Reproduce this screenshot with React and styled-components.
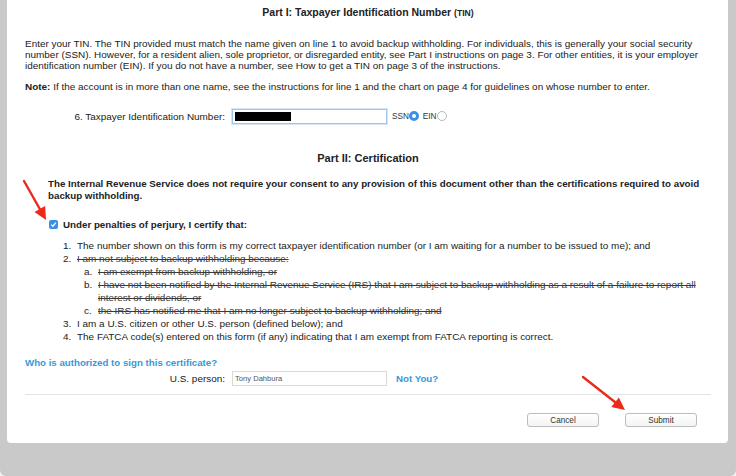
import styled, { createGlobalStyle } from "styled-components";

const GlobalStyle = createGlobalStyle`
  body {
    margin: 0;
    background: #f2f2f2;
    font-family: "Liberation Sans", Arial, sans-serif;
  }
`;

const Frame = styled.div`
  position: relative;
  width: 736px;
  height: 476px;
  box-sizing: border-box;
  background: #c9c9c9;
  padding: 0 8px 33px 7px;
  border-radius: 0 0 6px 6px;
  display: flex;
`;

const Panel = styled.div`
  flex: 1;
  background: #fff;
  border-radius: 0 0 4px 4px;
  padding: 0 17px 0 18px;
  color: #222;
  font-size: 9.95px;
`;

const Heading = styled.div`
  text-align: center;
  font-weight: bold;
  font-size: ${(p) => p.size}px;
  height: ${(p) => p.h}px;
  line-height: ${(p) => p.h}px;
  margin-top: ${(p) => p.top || 0}px;
  small {
    font-size: 8.6px;
  }
`;

const Para = styled.p`
  margin: ${(p) => p.top || 0}px 0 0;
  line-height: ${(p) => p.lh || 11}px;
  font-weight: ${(p) => (p.bold ? "bold" : "normal")};
  font-size: ${(p) => (p.bold ? "9.75px" : "inherit")};
  padding-left: ${(p) => p.indent || 0}px;
  white-space: nowrap;
`;

const FieldRow = styled.div`
  display: flex;
  align-items: center;
  height: ${(p) => p.h || 16}px;
  margin-top: ${(p) => p.top || 0}px;
`;

const Label = styled.span`
  width: 200px;
  text-align: right;
  padding-right: 7px;
`;

const TextBox = styled.div`
  width: 155px;
  height: 15px;
  box-sizing: border-box;
  border: 1px solid ${(p) => (p.focus ? "#9cc6ec" : "#d9d9d9")};
  box-shadow: ${(p) => (p.focus ? "0 0 0 1px #d4e6f7" : "none")};
  display: flex;
  align-items: center;
  padding: 0 2px;
  font-size: 7.6px;
  color: #555;
`;

const Redacted = styled.div`
  width: 56px;
  height: 9px;
  background: #000;
`;

const RadioLabel = styled.span`
  font-size: 8.2px;
  margin-left: ${(p) => p.gap || 0}px;
  color: #333;
`;

const Radio = styled.span`
  width: 10px;
  height: 10px;
  border-radius: 50%;
  box-sizing: border-box;
  border: ${(p) => (p.on ? "3px solid #3d8fe6" : "1px solid #b9b9b9")};
  background: #fff;
`;

const CheckRow = styled.div`
  display: flex;
  align-items: center;
  gap: 5px;
  margin-top: 15px;
  padding-left: 24px;
  height: 14px;
  font-weight: bold;
  font-size: 9.75px;
`;

const Check = styled.span`
  width: 9px;
  height: 9px;
  border-radius: 2px;
  background: #3b8fe4;
  display: flex;
  align-items: center;
  justify-content: center;
`;

const List = styled.ol`
  list-style: none;
  margin: 8px 0 0;
  padding: 0 0 0 38px;
`;

const Item = styled.li`
  display: flex;
  line-height: 13px;
  padding-left: ${(p) => (p.sub ? 21 : 0)}px;
`;

const Marker = styled.span`
  width: 14px;
  flex-shrink: 0;
`;

const Struck = styled.span`
  color: #3a3a3a;
  text-decoration: line-through;
`;

const LinkText = styled.span`
  color: #3a98d6;
  font-weight: bold;
  font-size: 9.7px;
  margin-left: ${(p) => p.gap || 0}px;
`;

const Divider = styled.div`
  height: 1px;
  background: #e4e4e4;
  margin-top: 8px;
`;

const ButtonBar = styled.div`
  display: flex;
  justify-content: flex-end;
  gap: 26px;
  padding-right: 14px;
  margin-top: 18px;
`;

const Button = styled.button`
  width: 72px;
  height: 14px;
  padding: 0;
  border: 1px solid #bdbdbd;
  border-radius: 3px;
  background: linear-gradient(#fff, #f4f4f4);
  font-family: "Liberation Sans", Arial, sans-serif;
  font-size: 8.2px;
  color: #333;
`;

const Arrow = styled.svg`
  position: absolute;
  left: ${(p) => p.x}px;
  top: ${(p) => p.y}px;
  overflow: visible;
`;

function RedArrow({ x, y, w, h }) {
  const ang = Math.atan2(h, w);
  const hl = 14;
  const sp = 0.45;
  const p1 = [w - hl * Math.cos(ang - sp), h - hl * Math.sin(ang - sp)];
  const p2 = [w - hl * Math.cos(ang + sp), h - hl * Math.sin(ang + sp)];
  return (
    <Arrow x={x} y={y} width={w} height={h}>
      <line x1="0" y1="0" x2={w - 8 * Math.cos(ang)} y2={h - 8 * Math.sin(ang)} stroke="#ec2a1c" strokeWidth="2.4" strokeLinecap="round" />
      <polygon points={`${w},${h} ${p1[0]},${p1[1]} ${p2[0]},${p2[1]}`} fill="#ec2a1c" />
    </Arrow>
  );
}

export default function App() {
  return (
    <>
      <GlobalStyle />
      <Frame>
        <Panel>
          <Heading size={10.5} h={12} top={6}>
            Part I: Taxpayer Identification Number <small>(TIN)</small>
          </Heading>
          <Para top={20}>
            Enter your TIN. The TIN provided must match the name given on line 1 to avoid backup withholding. For individuals, this is generally your social security
            <br />
            number (SSN). However, for a resident alien, sole proprietor, or disregarded entity, see Part I instructions on page 3. For other entities, it is your employer
            <br />
            identification number (EIN). If you do not have a number, see How to get a TIN on page 3 of the instructions.
          </Para>
          <Para top={10}>
            <b>Note:</b> If the account is in more than one name, see the instructions for line 1 and the chart on page 4 for guidelines on whose number to enter.
          </Para>
          <FieldRow top={16} h={16}>
            <Label>6. Taxpayer Identification Number:</Label>
            <TextBox focus>
              <Redacted />
            </TextBox>
            <RadioLabel gap={5}>SSN</RadioLabel>
            <Radio on />
            <RadioLabel gap={4}>EIN</RadioLabel>
            <Radio />
          </FieldRow>
          <Heading size={11} h={14} top={27}>
            Part II: Certification
          </Heading>
          <Para top={13} lh={12} bold indent={23}>
            The Internal Revenue Service does not require your consent to any provision of this document other than the certifications required to avoid
            <br />
            backup withholding.
          </Para>
          <CheckRow>
            <Check>
              <svg width="7" height="7" viewBox="0 0 7 7">
                <path d="M1.2 3.6 L2.9 5.2 L5.9 1.6" stroke="#fff" strokeWidth="1.3" fill="none" />
              </svg>
            </Check>
            Under penalties of perjury, I certify that:
          </CheckRow>
          <List>
            <Item>
              <Marker>1.</Marker>
              <span>The number shown on this form is my correct taxpayer identification number (or I am waiting for a number to be issued to me); and</span>
            </Item>
            <Item>
              <Marker>2.</Marker>
              <Struck>I am not subject to backup withholding because:</Struck>
            </Item>
            <Item sub>
              <Marker>a.</Marker>
              <Struck>I am exempt from backup withholding, or</Struck>
            </Item>
            <Item sub>
              <Marker>b.</Marker>
              <Struck>
                I have not been notified by the Internal Revenue Service (IRS) that I am subject to backup withholding as a result of a failure to report all
                <br />
                interest or dividends, or
              </Struck>
            </Item>
            <Item sub>
              <Marker>c.</Marker>
              <Struck>the IRS has notified me that I am no longer subject to backup withholding; and</Struck>
            </Item>
            <Item>
              <Marker>3.</Marker>
              <span>I am a U.S. citizen or other U.S. person (defined below); and</span>
            </Item>
            <Item>
              <Marker>4.</Marker>
              <span>The FATCA code(s) entered on this form (if any) indicating that I am exempt from FATCA reporting is correct.</span>
            </Item>
          </List>
          <Para top={13} lh={14}>
            <LinkText>Who is authorized to sign this certificate?</LinkText>
          </Para>
          <FieldRow h={16}>
            <Label>U.S. person:</Label>
            <TextBox>Tony Dahbura</TextBox>
            <LinkText gap={9}>Not You?</LinkText>
          </FieldRow>
          <Divider />
          <ButtonBar>
            <Button>Cancel</Button>
            <Button>Submit</Button>
          </ButtonBar>
        </Panel>
        <RedArrow x={24} y={181} w={22} h={39} />
        <RedArrow x={583} y={377} w={42} h={33} />
      </Frame>
    </>
  );
}
